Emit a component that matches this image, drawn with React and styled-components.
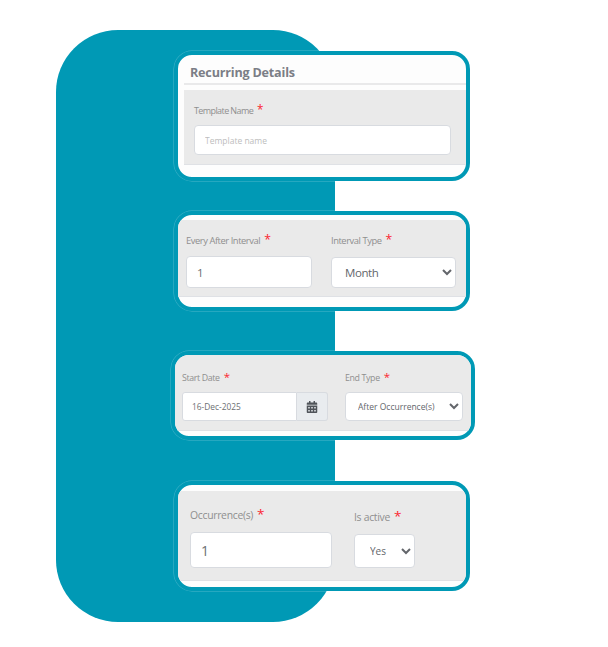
import React from 'react';
import styled, { createGlobalStyle } from 'styled-components';
import { FaCalendarAlt } from 'react-icons/fa';

const teal = '#0099b5';

const GlobalStyle = createGlobalStyle`
  html, body {
    margin: 0;
    padding: 0;
    background: #ffffff;
  }
  body {
    font-family: 'Open Sans', 'Liberation Sans', sans-serif;
  }
`

const Page = styled.div`
  display: grid;
  width: 608px;
  height: 647px;
  padding: 30px 0 25px 56px;
  box-sizing: border-box;
  overflow: hidden;
`

const Backdrop = styled.div`
  grid-area: 1 / 1;
  width: 279px;
  height: 592px;
  border-radius: 62px;
  background: ${teal};
`

const CardColumn = styled.div`
  grid-area: 1 / 1;
  display: flex;
  flex-direction: column;
  align-items: flex-start;
  padding: 21px 0 0 118px;
`

const Card = styled.section`
  box-sizing: border-box;
  width: ${props => props.$wide ? '304px' : '296px'};
  height: ${props => props.$height}px;
  margin-top: ${props => props.$gap || 0}px;
  margin-left: ${props => props.$wide ? '-3px' : '0'};
  padding-top: ${props => props.$inset || 0}px;
  border: 4px solid ${teal};
  border-radius: 18px;
  background: #fdfdfd;
  box-shadow: 0 0 0 0.5px rgba(255, 255, 255, 0.3);
  overflow: hidden;
`

const CardTitle = styled.h3`
  margin: 0 0 0 6px;
  padding: 0 0 3px 6px;
  height: 25px;
  border-bottom: 2px solid #e9e9ea;
  font-size: 12.6px;
  font-weight: 700;
  letter-spacing: -0.2px;
  line-height: 36px;
  color: #7b7e86;
`

const Band = styled.div`
  display: flex;
  align-items: flex-start;
  box-sizing: border-box;
  height: ${props => props.$height}px;
  margin-left: ${props => props.$offset || 0}px;
  margin-top: ${props => props.$top || 0}px;
  padding: ${props => props.$padding};
  border-bottom: 1px solid #dfe1e5;
  background: #eaeaea;
`

const Field = styled.div`
  display: flex;
  flex-direction: column;
  width: ${props => props.$width}px;
  margin-top: ${props => props.$top || 0}px;
  margin-right: ${props => props.$after || 0}px;
`

const Label = styled.label`
  display: block;
  height: 16px;
  margin-bottom: ${props => props.$below}px;
  font-size: ${props => props.$size}px;
  letter-spacing: ${props => props.$track}px;
  line-height: 16px;
  color: #8f8f8f;
  white-space: nowrap;
`

const Star = styled.span`
  margin-left: 4px;
  color: #fb2530;
  font-size: 1.3em;
  line-height: 1;
`

const TextInput = styled.input`
  box-sizing: border-box;
  width: 100%;
  height: ${props => props.$height}px;
  padding: 0 ${props => props.$pad || 10}px;
  border: 1px solid #d8dbe0;
  border-radius: 4px;
  background: #ffffff;
  font-family: inherit;
  font-size: ${props => props.$size}px;
  color: #6d6f73;
  outline: none;
  &::placeholder {
    color: #bdbdbd;
    opacity: 1;
  }
`

const Select = styled.select`
  box-sizing: border-box;
  width: 100%;
  height: ${props => props.$height}px;
  padding: 0 ${props => props.$padRight}px 0 ${props => props.$pad}px;
  border: 1px solid #d8dbe0;
  border-radius: 4px;
  background-color: #ffffff;
  font-family: inherit;
  font-size: ${props => props.$size}px;
  letter-spacing: ${props => props.$track || 0}px;
  color: #63666b;
  outline: none;
`

const DateGroup = styled.div`
  display: flex;
  height: 29px;
`

const DateInput = styled(TextInput)`
  flex: 1;
  min-width: 0;
  border-radius: 3px 0 0 3px;
`

const CalendarAddon = styled.span`
  display: flex;
  align-items: center;
  justify-content: center;
  box-sizing: border-box;
  width: 31px;
  border: 1px solid #d8dbe0;
  border-left: none;
  border-radius: 0 3px 3px 0;
  background: #e9ecef;
  color: #50545a;
  font-size: 12px;
`

export default function App() {
  return (
    <Page>
      <GlobalStyle />
      <Backdrop />
      <CardColumn>
        <Card $height={130}>
          <CardTitle>Recurring Details</CardTitle>
          <Band $height={75} $offset={6} $top={5} $padding="13px 15px 0 10px">
            <Field $width={257}>
              <Label $size={9} $track={-0.6} $below={6}>Template Name<Star>*</Star></Label>
              <TextInput $height={30} $size={8.5} placeholder="Template name" />
            </Field>
          </Band>
        </Card>

        <Card $height={100} $gap={30} $inset={5}>
          <Band $height={77} $padding="13px 10px 0 8px">
            <Field $width={126} $after={19}>
              <Label $size={9.4} $track={-0.45} $below={7}>Every After Interval<Star>*</Star></Label>
              <TextInput $height={32} $size={11.5} defaultValue="1" />
            </Field>
            <Field $width={125}>
              <Label $size={9.4} $track={-0.45} $below={8}>Interval Type<Star>*</Star></Label>
              <Select $height={31} $size={11.5} $track={-0.4} $pad={9} $padRight={8}>
                <option>Month</option>
              </Select>
            </Field>
          </Band>
        </Card>

        <Card $wide $height={89} $gap={40}>
          <Band $height={76} $padding="15px 8px 0 7px">
            <Field $width={146} $after={17}>
              <Label $size={8.8} $track={-0.35} $below={6}>Start Date<Star>*</Star></Label>
              <DateGroup>
                <DateInput $height={29} $size={8.4} $pad={9} defaultValue="16-Dec-2025" />
                <CalendarAddon><FaCalendarAlt /></CalendarAddon>
              </DateGroup>
            </Field>
            <Field $width={118}>
              <Label $size={8.8} $track={-0.35} $below={6}>End Type<Star>*</Star></Label>
              <Select $height={29} $size={8.5} $pad={8} $padRight={4}>
                <option>After Occurrence(s)</option>
              </Select>
            </Field>
          </Band>
        </Card>

        <Card $height={110} $gap={41} $inset={6}>
          <Band $height={90} $padding="16px 10px 0 12px">
            <Field $width={142} $after={22}>
              <Label $size={10.4} $track={-0.3} $below={9}>Occurrence(s)<Star>*</Star></Label>
              <TextInput $height={36} $size={14} defaultValue="1" />
            </Field>
            <Field $width={61} $top={2}>
              <Label $size={10.4} $track={-0.3} $below={9}>Is active<Star>*</Star></Label>
              <Select $height={34} $size={10} $pad={11} $padRight={10}>
                <option>Yes</option>
              </Select>
            </Field>
          </Band>
        </Card>
      </CardColumn>
    </Page>
  );
}
